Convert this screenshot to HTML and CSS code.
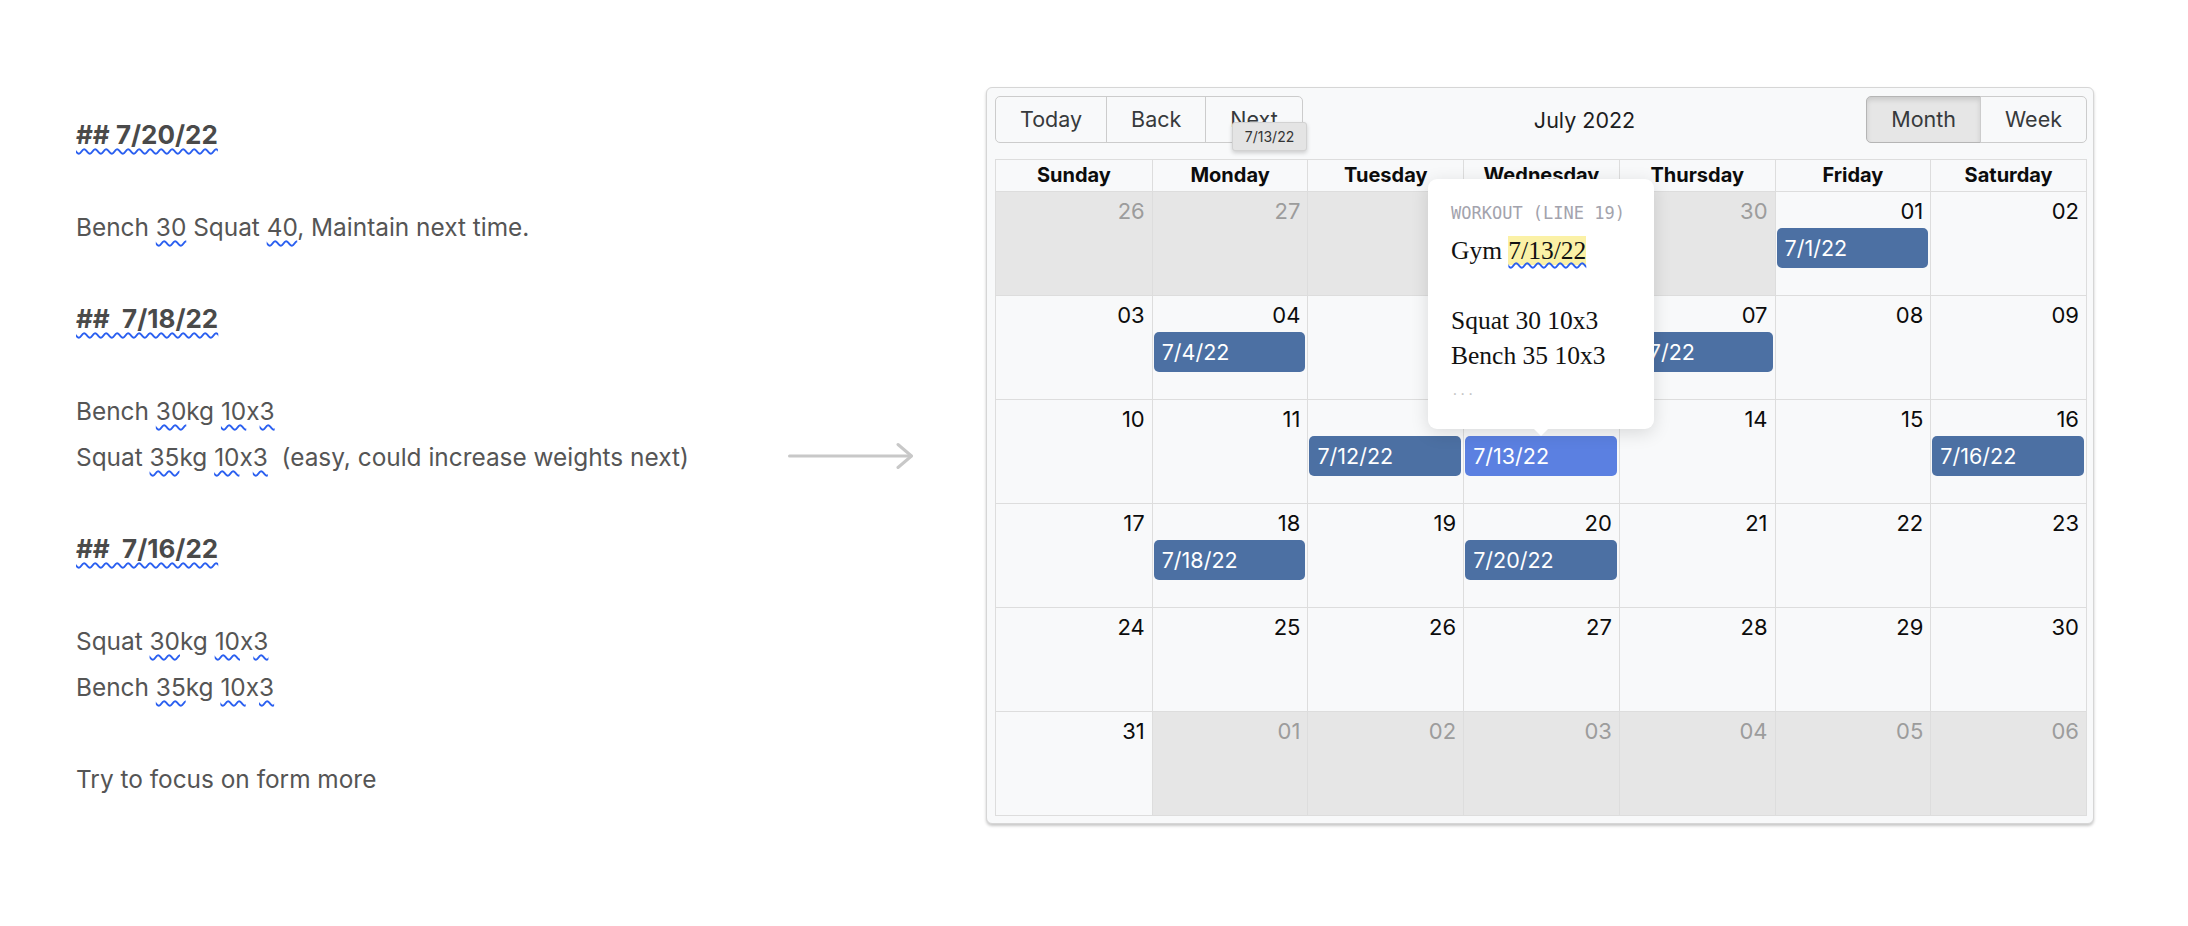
FILE: index.html
```html
<!DOCTYPE html>
<html lang="en">
<head>
<meta charset="utf-8">
<title>Workout calendar</title>
<link rel="stylesheet" href="styles.css">
</head>
<body>
<main class="page">
  <section class="notes">
    <p class="line heading"><span class="wavy">## 7/20/22</span></p>
    <p class="line gap">Bench <span class="wavy">30</span> Squat <span class="wavy">40</span>, Maintain next time.</p>
    <p class="line heading gap"><span class="wavy">##&nbsp; 7/18/22</span></p>
    <p class="line gap">Bench <span class="wavy">30</span>kg <span class="wavy">10</span>x<span class="wavy">3</span></p>
    <p class="line">Squat <span class="wavy">35</span>kg <span class="wavy">10</span>x<span class="wavy">3</span>&nbsp; (easy, could increase weights next)</p>
    <p class="line heading gap"><span class="wavy">##&nbsp; 7/16/22</span></p>
    <p class="line gap">Squat <span class="wavy">30</span>kg <span class="wavy">10</span>x<span class="wavy">3</span></p>
    <p class="line">Bench <span class="wavy">35</span>kg <span class="wavy">10</span>x<span class="wavy">3</span></p>
    <p class="line gap">Try to focus on form more</p>
  </section>

  <div class="arrow">
    <svg width="125" height="30" viewBox="0 0 125 30" aria-hidden="true">
      <line x1="1.5" y1="15" x2="123" y2="15" stroke="#c8c8c8" stroke-width="3" stroke-linecap="round"/>
      <polyline points="110,3.5 123.5,15 110,26.5" fill="none" stroke="#c8c8c8" stroke-width="3" stroke-linecap="round" stroke-linejoin="round"/>
    </svg>
  </div>

  <section class="cal">
    <div class="toolbar">
      <div class="btn-group">
        <button class="btn">Today</button><button class="btn">Back</button><button class="btn">Next</button>
      </div>
      <div class="label">July 2022</div>
      <div class="btn-group">
        <button class="btn active">Month</button><button class="btn">Week</button>
      </div>
      <div class="tip">7/13/22</div>
    </div>

    <div class="month">
      <div class="head">
        <div class="hcell">Sunday</div><div class="hcell">Monday</div><div class="hcell">Tuesday</div><div class="hcell">Wednesday</div><div class="hcell">Thursday</div><div class="hcell">Friday</div><div class="hcell">Saturday</div>
      </div>

      <div class="week">
        <div class="cell off"><div class="date">26</div></div>
        <div class="cell off"><div class="date">27</div></div>
        <div class="cell off"><div class="date">28</div></div>
        <div class="cell off"><div class="date">29</div></div>
        <div class="cell off"><div class="date">30</div></div>
        <div class="cell"><div class="date">01</div><div class="event">7/1/22</div></div>
        <div class="cell"><div class="date">02</div></div>
      </div>

      <div class="week">
        <div class="cell"><div class="date">03</div></div>
        <div class="cell"><div class="date">04</div><div class="event">7/4/22</div></div>
        <div class="cell"><div class="date">05</div></div>
        <div class="cell"><div class="date">06</div></div>
        <div class="cell"><div class="date">07</div><div class="event">7/7/22</div></div>
        <div class="cell"><div class="date">08</div></div>
        <div class="cell"><div class="date">09</div></div>
      </div>

      <div class="week">
        <div class="cell"><div class="date">10</div></div>
        <div class="cell"><div class="date">11</div></div>
        <div class="cell"><div class="date">12</div><div class="event">7/12/22</div></div>
        <div class="cell"><div class="date">13</div>
          <div class="event selected">7/13/22
            <div class="popover">
              <div class="pop-title">WORKOUT (LINE 19)</div>
              <div class="pop-line">Gym <span class="mark">7/13/22</span></div>
              <div class="pop-line">&nbsp;</div>
              <div class="pop-line">Squat 30 10x3</div>
              <div class="pop-line">Bench 35 10x3</div>
              <div class="pop-more">...</div>
            </div>
          </div>
        </div>
        <div class="cell"><div class="date">14</div></div>
        <div class="cell"><div class="date">15</div></div>
        <div class="cell"><div class="date">16</div><div class="event">7/16/22</div></div>
      </div>

      <div class="week">
        <div class="cell"><div class="date">17</div></div>
        <div class="cell"><div class="date">18</div><div class="event">7/18/22</div></div>
        <div class="cell"><div class="date">19</div></div>
        <div class="cell"><div class="date">20</div><div class="event">7/20/22</div></div>
        <div class="cell"><div class="date">21</div></div>
        <div class="cell"><div class="date">22</div></div>
        <div class="cell"><div class="date">23</div></div>
      </div>

      <div class="week">
        <div class="cell"><div class="date">24</div></div>
        <div class="cell"><div class="date">25</div></div>
        <div class="cell"><div class="date">26</div></div>
        <div class="cell"><div class="date">27</div></div>
        <div class="cell"><div class="date">28</div></div>
        <div class="cell"><div class="date">29</div></div>
        <div class="cell"><div class="date">30</div></div>
      </div>

      <div class="week">
        <div class="cell"><div class="date">31</div></div>
        <div class="cell off"><div class="date">01</div></div>
        <div class="cell off"><div class="date">02</div></div>
        <div class="cell off"><div class="date">03</div></div>
        <div class="cell off"><div class="date">04</div></div>
        <div class="cell off"><div class="date">05</div></div>
        <div class="cell off"><div class="date">06</div></div>
      </div>
    </div>
  </section>
</main>
</body>
</html>
```

FILE: styles.css
```css
* { box-sizing: border-box; }

html, body {
  margin: 0;
  padding: 0;
  background: #ffffff;
}

body {
  font-family: Inter, "Liberation Sans", Arial, sans-serif;
  font-feature-settings: "calt" 0;
  width: 2188px;
  height: 926px;
  overflow: hidden;
}

.page {
  display: flex;
  align-items: flex-start;
  padding: 87px 0 0 76px;
}

/* ---------- notes ---------- */
.notes {
  width: 712px;
  flex: none;
  margin-top: 25px;
  color: #555555;
}

.line {
  margin: 0;
  font-size: 24.4px;
  line-height: 46px;
  height: 46px;
  white-space: nowrap;
}

.line.gap { margin-top: 46px; }

.heading {
  font-size: 26px;
  font-weight: 700;
  color: #4a4a4a;
}

.wavy {
  text-decoration-line: underline;
  text-decoration-style: wavy;
  text-decoration-color: #2a5ff0;
  text-decoration-thickness: 1.6px;
  text-underline-offset: 4px;
}

/* ---------- arrow ---------- */
.arrow {
  width: 125px;
  flex: none;
  align-self: center;
  height: 30px;
}
.arrow svg { display: block; }

/* ---------- calendar ---------- */
.cal {
  position: relative;
  flex: none;
  width: 1108px;
  margin-left: 73px;
  padding: 8px 6px 7px 8px;
  background: #f8f9fa;
  border: 1px solid #d6d6d6;
  border-radius: 6px;
  box-shadow: 0 2px 3px rgba(0, 0, 0, 0.22);
}

.toolbar {
  position: relative;
  display: flex;
  align-items: center;
  height: 47px;
  margin-bottom: 16px;
}

.btn-group {
  display: flex;
  height: 47px;
}

.btn {
  font-family: Inter, "Liberation Sans", Arial, sans-serif;
  font-feature-settings: "calt" 0;
  font-size: 21.5px;
  color: #373a3c;
  background: transparent;
  border: 1px solid #cccccc;
  margin: 0;
  height: 47px;
  padding: 0 24px;
  line-height: 45px;
}
.btn + .btn { margin-left: -1px; }
.btn:first-child { border-radius: 5px 0 0 5px; }
.btn:last-child { border-radius: 0 5px 5px 0; }

.btn.active {
  background: #e6e6e6;
  border-color: #b5b5b5;
  box-shadow: inset 0 3px 5px rgba(0, 0, 0, 0.12);
}

.label {
  flex: 1;
  text-align: center;
  font-size: 21.5px;
  color: #1e1e1e;
}

.tip {
  position: absolute;
  left: 237px;
  top: 26px;
  width: 75px;
  height: 29px;
  background: #e4e4e4;
  border: 1px solid #d2d2d2;
  border-radius: 3px;
  box-shadow: 0 2px 4px rgba(0, 0, 0, 0.18);
  font-size: 14px;
  line-height: 27px;
  text-align: center;
  color: #333333;
  z-index: 5;
}

.month {
  display: flex;
  flex-direction: column;
  height: 657px;
  border: 1px solid #dddddd;
}

.head {
  display: grid;
  grid-template-columns: repeat(7, 1fr);
  height: 32px;
  flex: none;
  border-bottom: 1px solid #dddddd;
}

.hcell {
  text-align: center;
  font-weight: 700;
  font-size: 20px;
  line-height: 31px;
  color: #0c0c0c;
}
.hcell + .hcell { border-left: 1px solid #dddddd; }

.week {
  flex: 1 1 0;
  display: grid;
  grid-template-columns: repeat(7, 1fr);
  min-height: 0;
}
.week + .week { border-top: 1px solid #dddddd; }

.cell {
  background: #f8f9fa;
  min-width: 0;
}
.cell + .cell { border-left: 1px solid #dddddd; }
.cell.off { background: #e6e6e6; }

.date {
  height: 36px;
  padding: 6px 7px 0 0;
  text-align: right;
  font-size: 22px;
  line-height: 26px;
  color: #0c0c0c;
}
.off .date { color: #9c9c9c; }

.event {
  position: relative;
  height: 40px;
  margin: 0 2px 0 1px;
  padding-left: 8px;
  border-radius: 5px;
  background: #4c70a3;
  color: #ffffff;
  font-size: 21.5px;
  line-height: 40px;
  white-space: nowrap;
}
.event.selected { background: #5b80e1; }

/* ---------- popover ---------- */
.popover {
  position: absolute;
  left: 50%;
  bottom: calc(100% + 7px);
  width: 226px;
  height: 250px;
  margin-left: -113px;
  padding: 22px 20px 0 23px;
  background: #ffffff;
  border-radius: 9px;
  box-shadow: 0 4px 18px rgba(0, 0, 0, 0.13);
  z-index: 20;
  color: #111111;
  white-space: nowrap;
}
.popover::after {
  content: "";
  position: absolute;
  left: 50%;
  top: 100%;
  margin-left: -7px;
  border-left: 7px solid transparent;
  border-right: 7px solid transparent;
  border-top: 7px solid #ffffff;
}

.pop-title {
  font-family: "DejaVu Sans Mono", "Liberation Mono", monospace;
  font-size: 17px;
  line-height: 24px;
  color: #a3a3ad;
  margin-bottom: 8px;
}

.pop-line {
  font-family: "Liberation Serif", "Times New Roman", serif;
  font-size: 25.5px;
  line-height: 35px;
  height: 35px;
}

.mark {
  background: #fbf1a6;
  text-decoration-line: underline;
  text-decoration-style: wavy;
  text-decoration-color: #2a5ff0;
  text-decoration-thickness: 1.6px;
  text-underline-offset: 3px;
}

.pop-more {
  font-family: "DejaVu Sans Mono", "Liberation Mono", monospace;
  font-size: 13px;
  line-height: 20px;
  color: #c6c6c6;
  margin-top: 8px;
}
```
